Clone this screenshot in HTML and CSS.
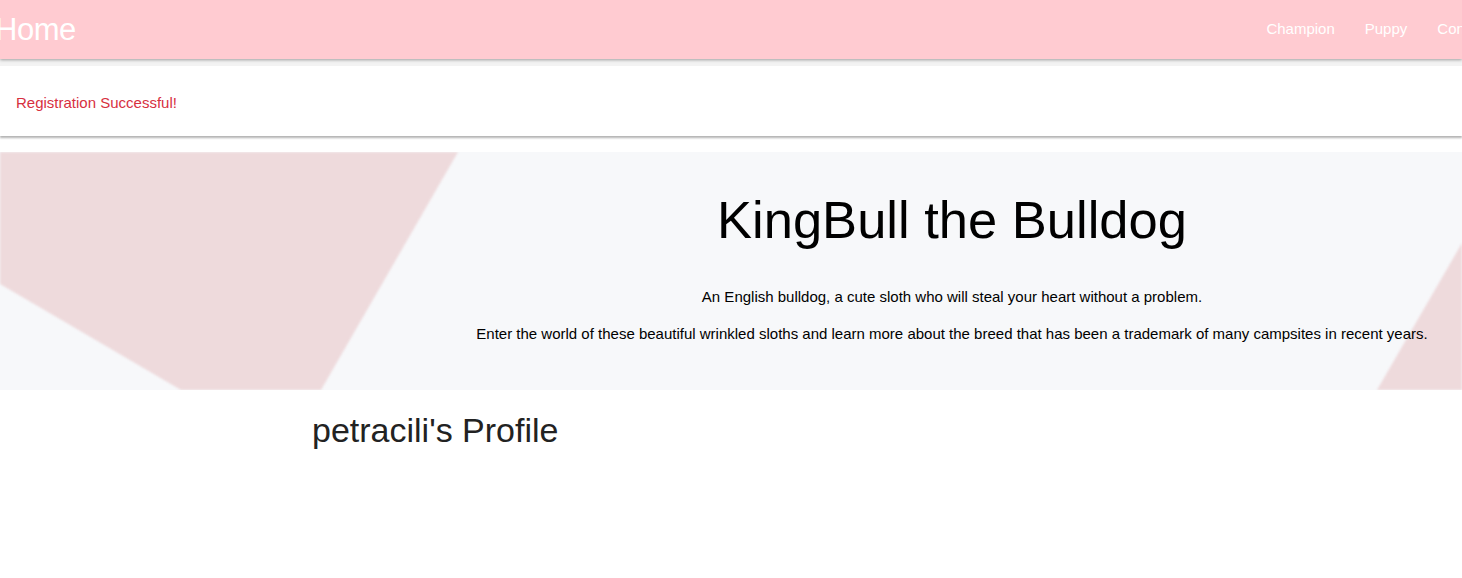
FILE: index.html
```html
<!DOCTYPE html>
<html lang="en">
<head>
<meta charset="utf-8">
<title>KingBull</title>
<link rel="stylesheet" href="styles.css">
</head>
<body>
<header class="navbar">
  <a class="brand" href="#">Home</a>
  <nav class="nav-links">
    <a href="#">Champion</a>
    <a href="#">Puppy</a>
    <a href="#">Contact</a>
  </nav>
</header>
<div class="alert-wrap">
  <div class="alert">Registration Successful!</div>
</div>
<section class="hero">
  <svg class="hero-bg" width="1462" height="238" viewBox="0 0 1462 238" preserveAspectRatio="none" aria-hidden="true">
    <polygon points="0,0 458,0 321,238 181,238 0,132" fill="#eedadc"/>
    <polygon points="1377,238 1462,91 1462,238" fill="#eedadc"/>
  </svg>
  <div class="hero-grid">
    <div></div>
    <div class="hero-content">
      <h1>KingBull the Bulldog</h1>
      <p>An English bulldog, a cute sloth who will steal your heart without a problem.</p>
      <p>Enter the world of these beautiful wrinkled sloths and learn more about the breed that has been a trademark of many campsites in recent years.</p>
    </div>
  </div>
</section>
<main class="profile">
  <h2>petracili's Profile</h2>
</main>
</body>
</html>
```
FILE: styles.css
```css
* { box-sizing: border-box; }
html, body { margin: 0; padding: 0; }
body {
  font-family: "Liberation Sans", Arial, sans-serif;
  background: #fff;
  overflow: hidden;
  width: 1462px;
}
.navbar {
  height: 59px;
  background: #ffcbd1;
  display: flex;
  align-items: center;
  justify-content: space-between;
  box-shadow: 0 1px 3px rgba(0,0,0,0.35);
  position: relative;
  z-index: 2;
  overflow: hidden;
}
.brand {
  color: #fff;
  text-decoration: none;
  font-size: 31px;
  margin-left: -5px;
  letter-spacing: -0.5px;
}
.nav-links {
  display: flex;
  gap: 30px;
  margin-right: -27px;
  padding-bottom: 3px;
}
.nav-links a {
  color: #fff;
  text-decoration: none;
  font-size: 15px;
}
.alert-wrap {
  padding-top: 7px;
  background: #f3f3f3;
}
.alert {
  height: 70px;
  background: #fff;
  display: flex;
  align-items: center;
  padding-left: 16px;
  padding-top: 2px;
  color: #d7303f;
  font-size: 15px;
  box-shadow: 0 2px 2px rgba(0,0,0,0.3);
}
.hero {
  margin-top: 16px;
  height: 238px;
  background: #f7f8fa;
  position: relative;
  overflow: hidden;
}
.hero-bg {
  position: absolute;
  left: 0;
  top: 0;
  filter: blur(0.8px);
}
.hero-grid {
  position: relative;
  display: grid;
  grid-template-columns: 442px 1fr;
}
.hero-content {
  text-align: center;
  color: #000;
  padding-top: 36px;
}
.hero-content h1 {
  font-weight: 400;
  font-size: 52.5px;
  margin: 0 0 36px;
  line-height: 64px;
}
.hero-content p {
  font-size: 15px;
  margin: 0 0 20px;
  line-height: 17px;
}
.profile {
  padding-left: 312px;
  padding-top: 19px;
}
.profile h2 {
  margin: 0;
  font-weight: 400;
  font-size: 34px;
  color: #222;
  line-height: 42px;
}
```
